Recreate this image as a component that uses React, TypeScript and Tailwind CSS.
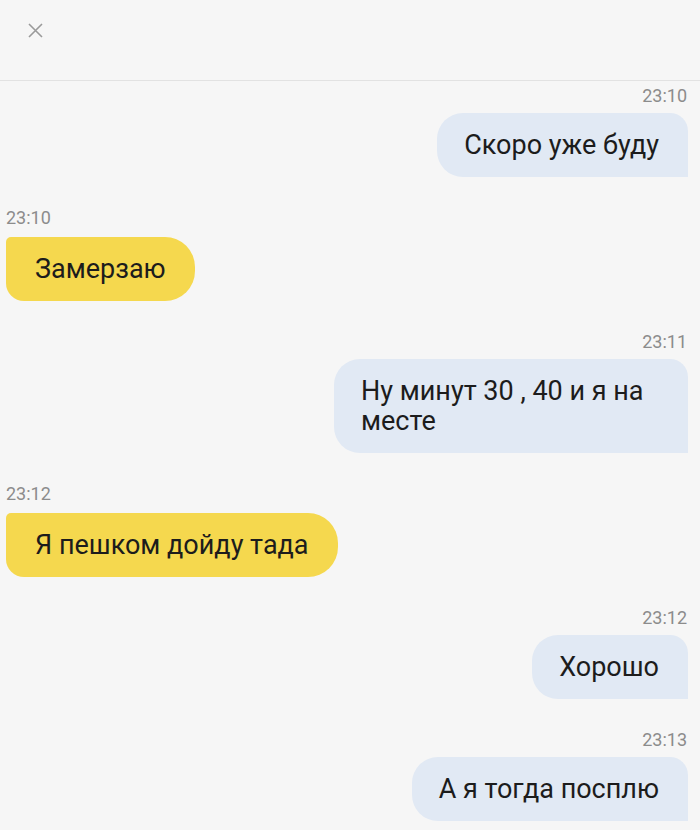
const font = { fontFamily: "Roboto, 'Noto Sans', sans-serif" };

type Msg = { time: string; text: string; out: boolean };

const messages: Msg[] = [
  { time: "23:10", text: "Скоро уже буду", out: true },
  { time: "23:10", text: "Замерзаю", out: false },
  { time: "23:11", text: "Ну минут 30 , 40 и я на месте", out: true },
  { time: "23:12", text: "Я пешком дойду тада", out: false },
  { time: "23:12", text: "Хорошо", out: true },
  { time: "23:13", text: "А я тогда посплю", out: true },
];

function Bubble({ m }: { m: Msg }) {
  if (m.out) {
    return (
      <div className="flex flex-col items-end">
        <div className="text-[18px] leading-5 text-[#8c8c8c] pr-[13px]">{m.time}</div>
        <div className="mt-[7px] max-w-[354px] rounded-l-[26px] rounded-tr-[18px] rounded-br-none bg-[#e1e9f4] pl-[27px] pr-[29px] py-[17px] text-[27px] leading-[30px] text-[#1c1c1c] mr-[12px]">
          {m.text}
        </div>
      </div>
    );
  }
  return (
    <div className="flex flex-col items-start">
      <div className="text-[18px] leading-5 text-[#8c8c8c] pl-[6px]">{m.time}</div>
      <div className="mt-[9px] ml-[6px] rounded-tl-[5px] rounded-bl-[18px] rounded-r-[30px] bg-[#f5d84e] px-[29px] py-[17px] text-[27px] leading-[30px] text-[#1c1c1c]">
        {m.text}
      </div>
    </div>
  );
}

export default function App() {
  return (
    <div className="w-[700px] h-[830px] overflow-hidden bg-[#f6f6f6]" style={font}>
      <div className="h-[81px] border-b border-[#e2e2e2] pl-[28px] pt-[23px]">
        <svg width="15" height="15" viewBox="0 0 15 15" fill="none" stroke="#9a9a9a" strokeWidth="1.6">
          <path d="M1 1 L14 14 M14 1 L1 14" />
        </svg>
      </div>
      <div className="flex flex-col gap-[31px] pt-[5px]">
        {messages.map((m, i) => (
          <Bubble key={i} m={m} />
        ))}
      </div>
    </div>
  );
}
